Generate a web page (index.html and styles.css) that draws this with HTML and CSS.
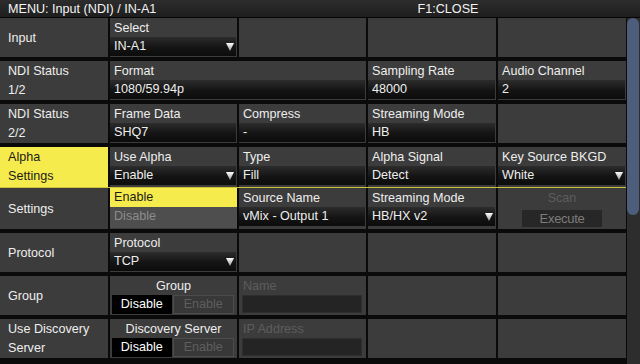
FILE: index.html
```html
<!DOCTYPE html>
<html>
<head>
    <title>MENU: Input (NDI)</title>
    <link rel="stylesheet" href="styles.css">
</head>
<body>

<div class="titlebar">
    <span class="title">MENU: Input (NDI) / IN-A1</span>
    <span class="fkey">F1:CLOSE</span>
</div>

<div class="main">
    <div class="menu">

        <div class="row">
            <div class="label">Input</div>
            <div class="cell">
                <div class="head">Select</div>
                <div class="value select">IN-A1 <svg class="arrow" width="8" height="8" viewBox="0 0 8 8"><defs><linearGradient id="ag" x1="0" y1="0" x2="0" y2="1"><stop offset="0" stop-color="#fff"/><stop offset="1" stop-color="#9a9a9a"/></linearGradient></defs><polygon points="0,0 8,0 4,8" fill="url(#ag)"/></svg></div>
            </div>
            <div class="cell"></div>
            <div class="cell"></div>
            <div class="cell"></div>
        </div>

        <div class="row">
            <div class="label two"><span>NDI Status</span><span>1/2</span></div>
            <div class="cell wide">
                <div class="head">Format</div>
                <div class="value">1080/59.94p</div>
            </div>
            <div class="cell">
                <div class="head">Sampling Rate</div>
                <div class="value">48000</div>
            </div>
            <div class="cell">
                <div class="head">Audio Channel</div>
                <div class="value">2</div>
            </div>
        </div>

        <div class="row">
            <div class="label two"><span>NDI Status</span><span>2/2</span></div>
            <div class="cell">
                <div class="head">Frame Data</div>
                <div class="value">SHQ7</div>
            </div>
            <div class="cell">
                <div class="head">Compress</div>
                <div class="value">-</div>
            </div>
            <div class="cell">
                <div class="head">Streaming Mode</div>
                <div class="value">HB</div>
            </div>
            <div class="cell"></div>
        </div>

        <div class="row alpha">
            <div class="label two active"><span>Alpha</span><span>Settings</span></div>
            <div class="cell">
                <div class="head">Use Alpha</div>
                <div class="value select">Enable <svg class="arrow" width="8" height="8" viewBox="0 0 8 8"><polygon points="0,0 8,0 4,8" fill="url(#ag)"/></svg></div>
            </div>
            <div class="cell">
                <div class="head">Type</div>
                <div class="value">Fill</div>
            </div>
            <div class="cell">
                <div class="head">Alpha Signal</div>
                <div class="value">Detect</div>
            </div>
            <div class="cell">
                <div class="head">Key Source BKGD</div>
                <div class="value select">White <svg class="arrow" width="8" height="8" viewBox="0 0 8 8"><polygon points="0,0 8,0 4,8" fill="url(#ag)"/></svg></div>
            </div>
        </div>

        <div class="row settings">
            <div class="label">Settings</div>
            <div class="cell dd-anchor">
                <div class="dropdown">
                    <div class="dd-item selected">Enable</div>
                    <div class="dd-item disabled">Disable</div>
                </div>
            </div>
            <div class="cell">
                <div class="head">Source Name</div>
                <div class="value">vMix - Output 1</div>
            </div>
            <div class="cell">
                <div class="head">Streaming Mode</div>
                <div class="value select">HB/HX v2 <svg class="arrow" width="8" height="8" viewBox="0 0 8 8"><polygon points="0,0 8,0 4,8" fill="url(#ag)"/></svg></div>
            </div>
            <div class="cell">
                <div class="head center dim">Scan</div>
                <div class="exec">Execute</div>
            </div>
        </div>

        <div class="row">
            <div class="label">Protocol</div>
            <div class="cell">
                <div class="head">Protocol</div>
                <div class="value select">TCP <svg class="arrow" width="8" height="8" viewBox="0 0 8 8"><polygon points="0,0 8,0 4,8" fill="url(#ag)"/></svg></div>
            </div>
            <div class="cell"></div>
            <div class="cell"></div>
            <div class="cell"></div>
        </div>

        <div class="row">
            <div class="label">Group</div>
            <div class="cell">
                <div class="head center">Group</div>
                <div class="toggle">
                    <span class="opt on">Disable</span>
                    <span class="opt off">Enable</span>
                </div>
            </div>
            <div class="cell">
                <div class="head dim">Name</div>
                <div class="field-off"></div>
            </div>
            <div class="cell"></div>
            <div class="cell"></div>
        </div>

        <div class="row">
            <div class="label two"><span>Use Discovery</span><span>Server</span></div>
            <div class="cell">
                <div class="head center">Discovery Server</div>
                <div class="toggle">
                    <span class="opt on">Disable</span>
                    <span class="opt off">Enable</span>
                </div>
            </div>
            <div class="cell">
                <div class="head dim">IP Address</div>
                <div class="field-off"></div>
            </div>
            <div class="cell"></div>
            <div class="cell"></div>
        </div>

    </div>
    <div class="scrollbar">
        <div class="thumb"></div>
    </div>
</div>

</body>
</html>
```

FILE: styles.css
```css
* {
    box-sizing: border-box;
    margin: 0;
    padding: 0;
}
body {
    font-family: 'Liberation Sans', Arial, sans-serif;
    font-size: 12.6px;
    color: #eeeeee;
    background-color: #0a0a0a;
    width: 640px;
    height: 364px;
    overflow: hidden;
}
.titlebar {
    height: 18px;
    display: flex;
    align-items: center;
    background: linear-gradient(#2d2d2d, #1e1e1e);
    border-bottom: 1px solid #050505;
}
.title {
    width: 256px;
    padding-left: 8px;
    color: #f4f4f4;
}
.fkey {
    flex: 1;
    text-align: center;
    color: #f4f4f4;
}
.main {
    display: flex;
    gap: 1px;
}
.menu {
    width: 626px;
}
.row {
    display: grid;
    grid-template-columns: 108px 127px 127px 128px 128px;
    column-gap: 2px;
    height: 39px;
    margin-bottom: 4px;
}
.row.alpha {
    height: 41px;
    margin-bottom: 0;
    border-bottom: 1px solid #cfc23c;
}
.row.settings {
    height: 41px;
}
.label {
    background-color: #3c3c3c;
    display: flex;
    align-items: center;
    padding-left: 8px;
}
.label.two {
    flex-direction: column;
    align-items: flex-start;
    justify-content: flex-start;
    padding-top: 1px;
}
.label.two span {
    display: block;
    height: 19px;
    line-height: 19px;
}
.label.active {
    background-color: #f6eb4c;
    color: #1c1c1c;
}
.cell {
    background-color: #3c3c3c;
    display: flex;
    flex-direction: column;
}
.cell.wide {
    grid-column: span 2;
}
.head {
    height: 18px;
    line-height: 20px;
    padding: 0 4px;
    white-space: nowrap;
}
.head.center {
    text-align: center;
}
.head.dim {
    color: #5c5c5c;
}
.value {
    height: 19px;
    margin-top: 1px;
    margin-right: 1px;
    line-height: 19px;
    padding: 0 4px;
    background: linear-gradient(#2c2c2c, #141414 55%, #0c0c0c);
    white-space: nowrap;
}
.value.select {
    display: flex;
    justify-content: space-between;
    align-items: center;
    padding-right: 2px;
}
.arrow {
    display: block;
}
.toggle {
    display: flex;
    gap: 1px;
    margin: 1px 3px 0 2px;
    height: 19px;
}
.opt {
    flex: 1;
    text-align: center;
    line-height: 19px;
}
.opt.on {
    background-color: #000;
    color: #ffffff;
}
.opt.off {
    background-color: #383838;
    border: 1px solid #4c4c4c;
    color: #5e5e5e;
    line-height: 17px;
}
.field-off {
    height: 18px;
    margin: 1px 4px 0 3px;
    background-color: #242424;
    border: 1px solid #2e2e2e;
}
.exec {
    width: 80px;
    height: 17px;
    margin: 4px 0 0 24px;
    background-color: #272727;
    color: #7c7c7c;
    text-align: center;
    line-height: 17px;
    font-size: 13px;
    letter-spacing: -0.3px;
}
.dd-anchor {
    position: relative;
}
.dropdown {
    position: absolute;
    top: 0;
    left: 0;
    right: 0;
    height: 40px;
}
.dd-item {
    height: 19px;
    line-height: 19px;
    padding: 0 4px;
}
.dd-item.selected {
    background-color: #f6eb4c;
    color: #1c1c1c;
}
.dd-item.disabled {
    height: 21px;
    background-color: #4e4e4e;
    color: #8c8c8c;
}
.scrollbar {
    width: 13px;
    height: 346px;
    background-color: #2d2d2d;
    padding-right: 1px;
}
.thumb {
    height: 197px;
    border-radius: 6px;
    background-color: #4c5e7c;
}
```
